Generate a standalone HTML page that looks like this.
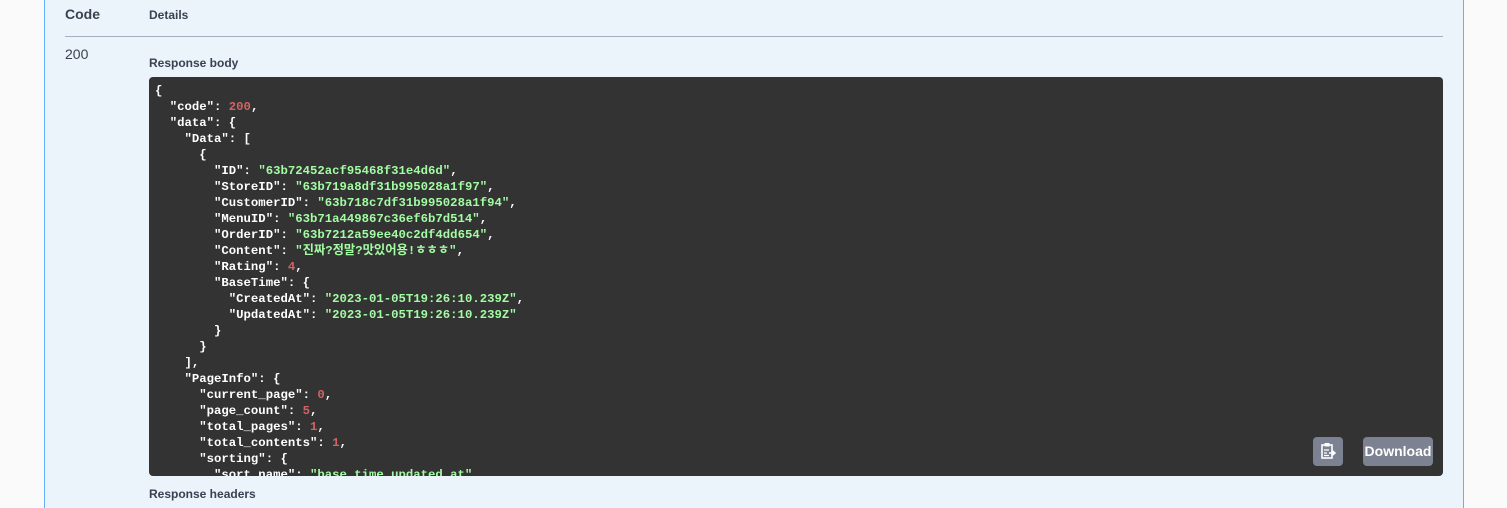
<!DOCTYPE html>
<html><head><meta charset="utf-8"><style>
body{margin:0;width:1507px;height:498px;overflow:hidden;background:#fafafa;font-family:"Liberation Sans","Noto Sans CJK KR",sans-serif;}
.panel{position:absolute;left:44px;top:-2px;width:1418px;height:510px;background:#ebf3fb;border-left:1px solid #61affe;border-right:1px solid #61affe;}
.t{position:absolute;color:#3b4151;}
.line{position:absolute;left:65px;top:36px;width:1378px;height:1px;background:#a5b1c2;}
pre{position:absolute;left:149px;top:77px;width:1294px;height:399px;margin:0;box-sizing:border-box;padding:6px 6px;background:#333;border-radius:4px;color:#fff;font-family:"Liberation Mono","Noto Sans CJK KR",monospace;font-size:12.3px;line-height:16px;font-weight:bold;overflow:hidden;}
.s{color:#a2fca2}.n{color:#d36363}
.btn{position:absolute;top:437px;height:29px;background:#7d8293;border-radius:4px;color:#fff;font-size:14px;font-weight:600;line-height:29px;text-align:center;}
</style></head><body>
<div class="panel"></div>
<div class="t" style="left:65px;top:6px;font-size:14px;font-weight:bold">Code</div>
<div class="t" style="left:149px;top:8px;font-size:12px;font-weight:bold">Details</div>
<div class="line"></div>
<div class="t" style="left:65px;top:46px;font-size:14px">200</div>
<div class="t" style="left:149px;top:56px;font-size:12px;font-weight:bold">Response body</div>
<pre>{
  "code": <span class="n">200</span>,
  "data": {
    "Data": [
      {
        "ID": <span class="s">"63b72452acf95468f31e4d6d"</span>,
        "StoreID": <span class="s">"63b719a8df31b995028a1f97"</span>,
        "CustomerID": <span class="s">"63b718c7df31b995028a1f94"</span>,
        "MenuID": <span class="s">"63b71a449867c36ef6b7d514"</span>,
        "OrderID": <span class="s">"63b7212a59ee40c2df4dd654"</span>,
        "Content": <span class="s">"진짜?정말?맛있어용!ㅎㅎㅎ"</span>,
        "Rating": <span class="n">4</span>,
        "BaseTime": {
          "CreatedAt": <span class="s">"2023-01-05T19:26:10.239Z"</span>,
          "UpdatedAt": <span class="s">"2023-01-05T19:26:10.239Z"</span>
        }
      }
    ],
    "PageInfo": {
      "current_page": <span class="n">0</span>,
      "page_count": <span class="n">5</span>,
      "total_pages": <span class="n">1</span>,
      "total_contents": <span class="n">1</span>,
      "sorting": {
        "sort_name": <span class="s">"base_time.updated_at"</span>
</pre>
<div class="btn" style="left:1313px;width:30px">
<svg width="16" height="18" viewBox="0 0 16 18" style="margin-top:5px"><rect x="2" y="3" width="10" height="13" fill="none" stroke="#fff" stroke-width="1.6"/><rect x="4.5" y="1" width="5" height="3.5" fill="#fff"/><path d="M4 8h5M4 11h3M4 13.5h5" stroke="#fff" stroke-width="1.3"/><path d="M9 11h6M12 8.5l3 2.5-3 2.5" stroke="#fff" stroke-width="1.5" fill="none"/></svg>
</div>
<div class="btn" style="left:1363px;width:70px">Download</div>
<div class="t" style="left:149px;top:487px;font-size:12px;font-weight:bold">Response headers</div>
</body></html>
